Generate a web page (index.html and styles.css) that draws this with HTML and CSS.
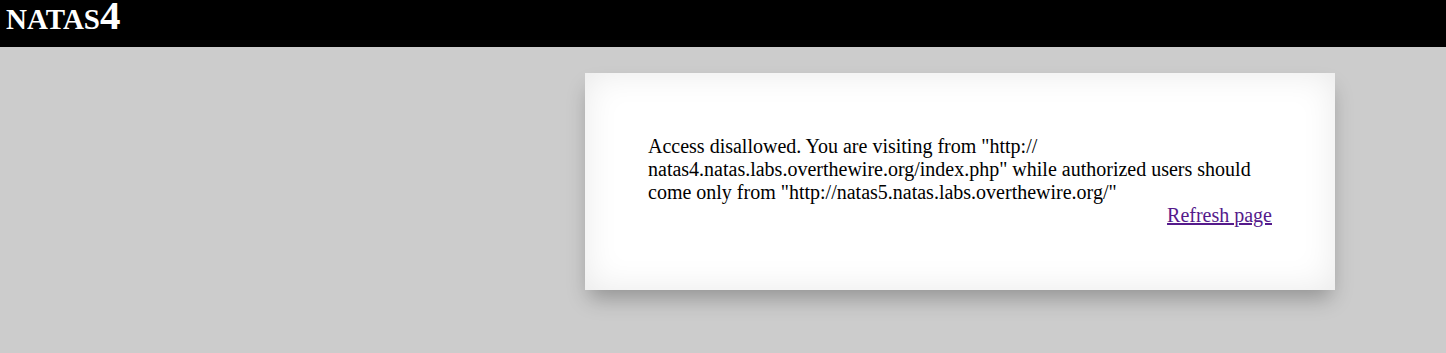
FILE: index.html
```
<!DOCTYPE html>
<html lang="en">
<head>
    <meta charset="UTF-8">
    <meta name="viewport" content="width=device-width, initial-scale=1.0">
    <title>natas4</title>
    <link rel="stylesheet" href="styles.css">
</head>
<body>
    <div class="header">
        <h1>natas4</h1>
    </div>

    <div class="content">
        Access disallowed. You are visiting from "http://<wbr>natas4.natas.labs.overthewire.org/index.php" while authorized users should come only from "http://natas5.natas.labs.overthewire.org/"
        <div class="viewsource"><a href="index.php">Refresh page</a></div>
    </div>
</body>
</html>
```

FILE: styles.css
```
html, body {
    min-height: 100vh;
}

body {
    margin: 0;
    background-color: #cccccc;
    font-family: "Liberation Serif", "Times New Roman", serif;
    font-size: 20px;
    color: #000;
}

.header {
    height: 47px;
    background-color: #000;
    padding-left: 6px;
}

.header h1 {
    margin: 0;
    font-size: 41px;
    line-height: 31px;
    font-variant: small-caps;
    font-weight: bold;
    color: #fff;
}

.content {
    box-sizing: border-box;
    width: 750px;
    height: 217px;
    margin: 26px 0 0 585px;
    padding: 62px 63px 63px 63px;
    background-color: #fff;
    box-shadow: inset 0 0 35px rgba(0, 0, 0, 0.09), 0 12px 20px -4px rgba(0, 0, 0, 0.28);
}

.viewsource {
    text-align: right;
}

.viewsource a {
    color: #551a8b;
}
```
